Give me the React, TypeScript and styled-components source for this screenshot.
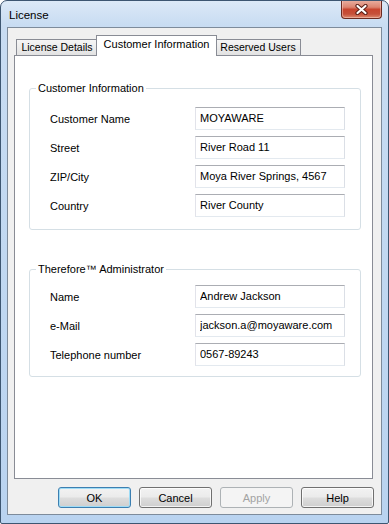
import React from "react";
import styled, { createGlobalStyle, css } from "styled-components";

const GlobalStyle = createGlobalStyle`
  html, body { margin: 0; padding: 0; background: #ffffff; }
  body { font-family: "Liberation Sans", Arial, sans-serif; font-size: 11px; color: #000; }
  * { box-sizing: border-box; }
`;

const Window = styled.div`
  width: 389px;
  height: 524px;
  border: 1px solid #3d5671;
  border-radius: 7px 7px 2px 2px;
  background: linear-gradient(180deg, #dce9f7 0px, #c8dcf2 24px, #bfd7f1 60%, #b9d3f0 100%);
  display: flex;
  flex-direction: column;
  padding: 0 6px 8px 6px;
  overflow: hidden;
`;

const TitleBar = styled.div`
  height: 26px;
  display: flex;
  align-items: flex-start;
  flex-shrink: 0;
`;

const Title = styled.div`
  padding: 8px 0 0 2px;
  line-height: 13px;
  font-size: 11.5px;
  color: #000;
`;

const CloseButton = styled.div`
  margin-left: auto;
  margin-top: -1px;
  width: 41px;
  height: 19px;
  border: 1px solid #6b2a21;
  border-top: none;
  border-radius: 0 0 4px 4px;
  background: linear-gradient(180deg, #eab1a3 0%, #dc8470 40%, #c8452f 52%, #c6503a 78%, #dd8a70 100%);
  box-shadow: inset 0 0 0 1px rgba(255, 220, 210, 0.45);
  display: flex;
  align-items: center;
  justify-content: center;
`;

const Client = styled.div`
  flex: 1;
  border: 1px solid #7d8b9b;
  background: #f0f0f0;
  display: flex;
  flex-direction: column;
  padding: 0 7px 6px 6px;
  min-height: 0;
`;

const TabStrip = styled.div`
  height: 27px;
  display: flex;
  align-items: flex-end;
  padding-left: 2px;
  flex-shrink: 0;
  margin-right: 1px;
`;

const Tab = styled.div<{ $active?: boolean; $width: number }>`
  width: ${(p) => p.$width}px;
  height: 16px;
  border: 1px solid #898c95;
  border-bottom: none;
  background: linear-gradient(180deg, #f5f5f5 0%, #ececec 50%, #e2e2e2 100%);
  padding-top: 1px;
  line-height: 13px;
  font-size: 10.5px;
  text-align: center;
  white-space: nowrap;
  color: #000;
  position: relative;
  ${(p) =>
    p.$active &&
    css`
      height: 21px;
      margin: 0 -2px -1px -2px;
      padding-top: 2px;
      font-size: 11px;
      background: #ffffff;
      z-index: 1;
    `}
`;

const Panel = styled.div`
  flex: 1;
  border: 1px solid #898c95;
  background: #ffffff;
  margin-right: 1px;
  padding: 32px 11px 0 14px;
  display: flex;
  flex-direction: column;
`;

const GroupBox = styled.div<{ $padTop: number; $padBottom: number; $gapTop?: number }>`
  position: relative;
  border: 1px solid #d5dfe5;
  border-radius: 3px;
  padding: ${(p) => p.$padTop}px 0 ${(p) => p.$padBottom}px 20px;
  margin-top: ${(p) => p.$gapTop ?? 0}px;
  display: flex;
  flex-direction: column;
  gap: 6px;
`;

const Caption = styled.div`
  position: absolute;
  top: -7px;
  left: 6px;
  padding: 0 2px;
  line-height: 13px;
  background: #ffffff;
  white-space: nowrap;
`;

const Row = styled.div`
  height: 23px;
  display: flex;
  align-items: center;
`;

const Label = styled.div`
  width: 145px;
  padding-top: 2px;
  line-height: 13px;
  white-space: nowrap;
`;

const Field = styled.input`
  width: 150px;
  height: 23px;
  border: 1px solid;
  border-color: #abadb3 #dbdfe6 #e3e9ef #e2e3ea;
  padding: 0 0 2px 4px;
  margin: 0;
  font-family: "Liberation Sans", Arial, sans-serif;
  font-size: 11px;
  color: #000;
  background: #ffffff;
  outline: none;
`;

const ButtonRow = styled.div`
  margin-top: 8px;
  display: flex;
  justify-content: flex-end;
  gap: 8px;
  flex-shrink: 0;
`;

const Button = styled.button<{ $default?: boolean }>`
  width: 73px;
  height: 21px;
  border: 1px solid #707070;
  border-radius: 3px;
  background: linear-gradient(180deg, #f2f2f2 0%, #ebebeb 48%, #dddddd 52%, #cfcfcf 100%);
  box-shadow: inset 0 0 0 1px rgba(255, 255, 255, 0.75);
  font-family: "Liberation Sans", Arial, sans-serif;
  font-size: 11px;
  color: #000;
  padding: 0;
  ${(p) =>
    p.$default &&
    css`
      border-color: #3c7fb1;
      box-shadow: inset 0 0 0 1px #9fdcf6;
    `}
  &:disabled {
    border-color: #adb2b5;
    background: #f4f4f4;
    box-shadow: none;
    color: #a3a3a3;
  }
`;

const customerRows: [string, string][] = [
  ["Customer Name", "MOYAWARE"],
  ["Street", "River Road 11"],
  ["ZIP/City", "Moya River Springs, 4567"],
  ["Country", "River County"],
];

const adminRows: [string, string][] = [
  ["Name", "Andrew Jackson"],
  ["e-Mail", "jackson.a@moyaware.com"],
  ["Telephone number", "0567-89243"],
];

const CloseGlyph = () => (
  <svg width="13" height="11" viewBox="0 0 13 11">
    <path d="M2.5 2 L10.5 9 M10.5 2 L2.5 9" stroke="#5a1e16" strokeWidth="4.2" strokeLinecap="round" />
    <path d="M2.5 2 L10.5 9 M10.5 2 L2.5 9" stroke="#ffffff" strokeWidth="2.2" strokeLinecap="round" />
  </svg>
);

export default function App() {
  return (
    <>
      <GlobalStyle />
      <Window>
        <TitleBar>
          <Title>License</Title>
          <CloseButton>
            <CloseGlyph />
          </CloseButton>
        </TitleBar>
        <Client>
          <TabStrip>
            <Tab $width={82}>License Details</Tab>
            <Tab $width={121} $active>
              Customer Information
            </Tab>
            <Tab $width={86}>Reserved Users</Tab>
          </TabStrip>
          <Panel>
            <GroupBox $padTop={18} $padBottom={12}>
              <Caption>Customer Information</Caption>
              {customerRows.map(([label, value]) => (
                <Row key={label}>
                  <Label>{label}</Label>
                  <Field readOnly defaultValue={value} />
                </Row>
              ))}
            </GroupBox>
            <GroupBox $padTop={15} $padBottom={10} $gapTop={39}>
              <Caption>Therefore™ Administrator</Caption>
              {adminRows.map(([label, value]) => (
                <Row key={label}>
                  <Label>{label}</Label>
                  <Field readOnly defaultValue={value} />
                </Row>
              ))}
            </GroupBox>
          </Panel>
          <ButtonRow>
            <Button $default>OK</Button>
            <Button>Cancel</Button>
            <Button disabled>Apply</Button>
            <Button>Help</Button>
          </ButtonRow>
        </Client>
      </Window>
    </>
  );
}
